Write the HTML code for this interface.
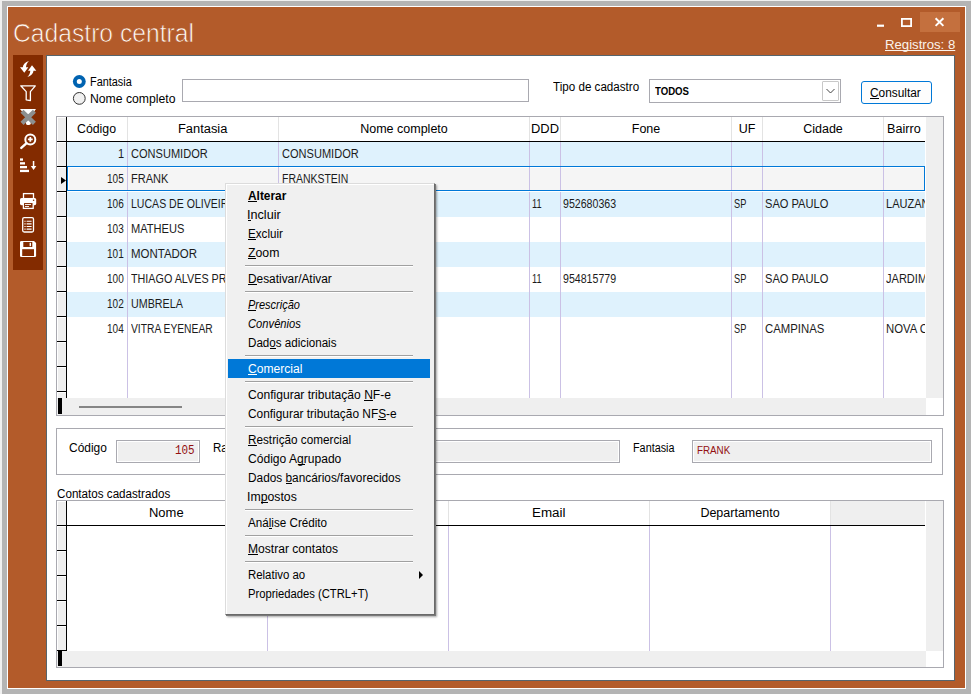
<!DOCTYPE html><html><head><meta charset="utf-8"><style>
*{margin:0;padding:0}
html,body{width:971px;height:694px;overflow:hidden;background:#f0f0f0}
body{position:relative;font-family:"Liberation Sans",sans-serif}
.a{position:absolute}
.t{white-space:pre;transform-origin:0 0}
u{text-decoration:underline;text-underline-offset:1px}
</style></head><body>
<div class="a" style="left:0px;top:0px;width:971px;height:694px;background:#f0f0f0;"></div>
<div class="a" style="left:2px;top:1px;width:969px;height:693px;background:#b4b4b4;"></div>
<div class="a" style="left:7px;top:6px;width:959px;height:683px;background:#ffffff;"></div>
<div class="a" style="left:8px;top:7px;width:957px;height:681px;background:#b35b2a;"></div>
<div class="a t" style="left:13.27px;top:20.00px;font-family:'Liberation Sans', sans-serif;font-size:26.5px;line-height:26.5px;color:#fffaf5;transform:scaleX(0.9307);-webkit-text-stroke:0.7px #b35b2a;">Cadastro central</div>
<div class="a" style="left:920px;top:12px;width:40px;height:20px;background:#c4703e;"></div>
<svg class="a" style="left:870px;top:8px" width="96" height="30" viewBox="0 0 96 30"><rect x="7" y="16.6" width="7" height="2.2" fill="#fff"/><rect x="31.9" y="10.9" width="9.2" height="7.2" fill="none" stroke="#fff" stroke-width="1.8"/><path d="M65.6 10.3 L73.4 17.9 M73.4 10.3 L65.6 17.9" stroke="#fff" stroke-width="2" fill="none"/></svg>
<div class="a t" style="left:884.99px;top:38.00px;font-family:'Liberation Sans', sans-serif;font-size:13px;line-height:13px;color:#fbf3ec;transform:scaleX(1.0128);text-decoration:underline;text-decoration-skip-ink:none;">Registros: 8</div>
<div class="a" style="left:13px;top:55px;width:30px;height:215px;background:#832b00;"></div>
<svg class="a" style="left:13px;top:55px" width="30" height="215" viewBox="13 55 30 215">
<g fill="#fff">
<path d="M29 61 C25.2 62,23 64.5,22.8 67.3 L20 67.3 L24.3 72.8 L28.3 67.3 L26 67.3 C26.1 64.8,27.2 62.6,29 61 Z"/>
<path d="M29 61 C25.2 62,23 64.5,22.8 67.3 L20 67.3 L24.3 72.8 L28.3 67.3 L26 67.3 C26.1 64.8,27.2 62.6,29 61 Z" transform="rotate(180 28.15 69)"/>
</g>
<path d="M20.8 85.8 H35.3 L30.4 91.6 V100.6 L26.2 99.8 V91.6 Z" fill="none" stroke="#fff" stroke-width="1.3" stroke-linejoin="round"/>
<path d="M20 109 H36 L30.8 116 V123.6 Q30.8 125 29 125 H27.6 Q25.9 125 25.9 123 V116 Z" fill="#fff"/>
<path d="M22 111.2 L34.4 123.4 M34.4 111.2 L22 123.4" stroke="#8d8f8f" stroke-width="4.3"/>
<circle cx="30.3" cy="139.4" r="5" fill="none" stroke="#fff" stroke-width="2"/>
<path d="M27.9 139.4 H32.7 M30.3 137 V141.8" stroke="#fff" stroke-width="1.8"/>
<path d="M26.6 143.2 L21.3 147.9" stroke="#fff" stroke-width="2.4" stroke-linecap="round"/>
<g fill="#fff">
<rect x="20" y="158.4" width="3" height="2.3"/>
<rect x="20" y="162.2" width="5" height="2.3"/>
<rect x="20" y="166" width="7" height="2.3"/>
<rect x="20" y="169.8" width="9" height="2.3"/>
<rect x="32.8" y="161" width="1.5" height="6"/>
<path d="M30.8 166 H36.3 L33.55 170 Z"/>
</g>
<rect x="23.5" y="193.6" width="10" height="5" fill="none" stroke="#fff" stroke-width="1.3"/>
<rect x="20" y="198" width="16.2" height="7.2" rx="1.6" fill="#fff"/>
<rect x="23.4" y="202.4" width="9.8" height="6" fill="#832b00" stroke="#fff" stroke-width="1.3"/>
<path d="M25 204.5 H31 M25 206.5 H29" stroke="#fff" stroke-width="0.9"/>
<circle cx="33.6" cy="200.2" r="0.8" fill="#832b00"/>
<rect x="22.7" y="217.6" width="10.8" height="14.4" rx="1.5" fill="none" stroke="#fff" stroke-width="1.3"/>
<path d="M24.4 221.3 H25.6 M26.6 221.3 H31.6 M24.4 223.9 H25.6 M26.6 223.9 H31.6 M24.4 226.5 H25.6 M26.6 226.5 H31.6 M24.4 229.1 H25.6 M26.6 229.1 H31.6" stroke="#fff" stroke-width="1.1"/>
<path d="M20 242.3 Q20 241 21.3 241 H34 L36.1 243.1 V255.7 Q36.1 257 34.8 257 H21.3 Q20 257 20 255.7 Z" fill="#fff"/>
<rect x="23.3" y="242" width="9" height="5" fill="#832b00"/>
<rect x="29.6" y="242.8" width="1.4" height="3.4" fill="#fff"/>
<rect x="22.2" y="249.2" width="11.8" height="6.8" fill="#832b00"/>
</svg>
<div class="a" style="left:46px;top:55px;width:909px;height:626px;background:#ffffff;border:1px solid #56646c;box-sizing:border-box;"></div>
<svg class="a" style="left:66px;top:70px" width="30" height="40" viewBox="66 70 30 40">
<circle cx="79.3" cy="81.5" r="6.4" fill="#0063b1"/><circle cx="79.3" cy="81.5" r="2.5" fill="#fff"/>
<circle cx="79.3" cy="98.4" r="5.9" fill="#f0f0f0" stroke="#333" stroke-width="1"/>
</svg>
<div class="a t" style="left:89.50px;top:76.00px;font-family:'Liberation Sans', sans-serif;font-size:12px;line-height:12px;color:#000;transform:scaleX(0.9061);">Fantasia</div>
<div class="a t" style="left:89.50px;top:93.00px;font-family:'Liberation Sans', sans-serif;font-size:12px;line-height:12px;color:#000;transform:scaleX(1.0171);">Nome completo</div>
<div class="a" style="left:182px;top:79px;width:347px;height:23px;background:#fff;border:1px solid #a9a9b0;box-sizing:border-box;"></div>
<div class="a t" style="left:553.20px;top:81.00px;font-family:'Liberation Sans', sans-serif;font-size:12px;line-height:12px;color:#000;transform:scaleX(0.9690);">Tipo de cadastro</div>
<div class="a" style="left:649px;top:79px;width:192px;height:24px;background:#fff;border:1px solid #a9a9b0;box-sizing:border-box;"></div>
<div class="a t" style="left:654.50px;top:86.00px;font-family:'Liberation Sans', sans-serif;font-size:10.5px;font-weight:bold;line-height:10.5px;color:#000;transform:scaleX(0.9154);">TODOS</div>
<div class="a" style="left:822px;top:81px;width:17px;height:20px;background:#fff;border:1px solid #c8c8c8;box-sizing:border-box;border-radius:1px;"></div>
<svg class="a" style="left:822px;top:81px" width="17" height="20" viewBox="0 0 17 20"><path d="M4.5 8 L8.5 12 L12.5 8" fill="none" stroke="#444" stroke-width="1"/></svg>
<div class="a" style="left:861px;top:81px;width:71px;height:23px;background:#fdfdfd;border:1px solid #0078d7;box-sizing:border-box;border-radius:3px;"></div>
<div class="a t" style="left:870.20px;top:87.00px;font-family:'Liberation Sans', sans-serif;font-size:12px;line-height:12px;color:#000;transform:scaleX(0.9891);">Consultar</div><div class="a" style="left:870.20px;top:98px;width:8.57px;height:1px;background:#000"></div>
<div class="a" style="left:56px;top:116px;width:888px;height:300px;background:#fff;border:1px solid #a9a9b0;box-sizing:border-box;"></div>
<div class="a" style="left:67px;top:142px;width:858px;height:25px;background:#dff2fd;"></div>
<div class="a" style="left:67px;top:167px;width:858px;height:25px;background:#ffffff;"></div>
<div class="a" style="left:67px;top:192px;width:858px;height:25px;background:#dff2fd;"></div>
<div class="a" style="left:67px;top:217px;width:858px;height:25px;background:#ffffff;"></div>
<div class="a" style="left:67px;top:242px;width:858px;height:25px;background:#dff2fd;"></div>
<div class="a" style="left:67px;top:267px;width:858px;height:25px;background:#ffffff;"></div>
<div class="a" style="left:67px;top:292px;width:858px;height:25px;background:#dff2fd;"></div>
<div class="a" style="left:67px;top:317px;width:858px;height:25px;background:#ffffff;"></div>
<div class="a" style="left:67px;top:342px;width:858px;height:25px;background:#ffffff;"></div>
<div class="a" style="left:67px;top:367px;width:858px;height:25px;background:#ffffff;"></div>
<div class="a" style="left:67px;top:392px;width:858px;height:6px;background:#fff;"></div>
<div class="a" style="left:67px;top:117px;width:858px;height:24px;background:#fff;"></div>
<div class="a" style="left:127px;top:117px;width:1px;height:24px;background:#e3e3e3;"></div>
<div class="a" style="left:127px;top:142px;width:1px;height:256px;background:#cbc1e5;"></div>
<div class="a" style="left:278px;top:117px;width:1px;height:24px;background:#e3e3e3;"></div>
<div class="a" style="left:278px;top:142px;width:1px;height:256px;background:#cbc1e5;"></div>
<div class="a" style="left:529px;top:117px;width:1px;height:24px;background:#e3e3e3;"></div>
<div class="a" style="left:529px;top:142px;width:1px;height:256px;background:#cbc1e5;"></div>
<div class="a" style="left:560px;top:117px;width:1px;height:24px;background:#e3e3e3;"></div>
<div class="a" style="left:560px;top:142px;width:1px;height:256px;background:#cbc1e5;"></div>
<div class="a" style="left:731px;top:117px;width:1px;height:24px;background:#e3e3e3;"></div>
<div class="a" style="left:731px;top:142px;width:1px;height:256px;background:#cbc1e5;"></div>
<div class="a" style="left:762px;top:117px;width:1px;height:24px;background:#e3e3e3;"></div>
<div class="a" style="left:762px;top:142px;width:1px;height:256px;background:#cbc1e5;"></div>
<div class="a" style="left:883px;top:117px;width:1px;height:24px;background:#e3e3e3;"></div>
<div class="a" style="left:883px;top:142px;width:1px;height:256px;background:#cbc1e5;"></div>
<div class="a" style="left:57px;top:141px;width:868px;height:1px;background:#000;"></div>
<div class="a" style="left:67px;top:191px;width:858px;height:1px;background:#fff;"></div>
<div class="a" style="left:67px;top:166px;width:858px;height:25px;background:#f5f5f5;border:1px solid #0078d7;box-sizing:border-box;"></div>
<div class="a" style="left:68px;top:167px;width:856px;height:23px;border-top:1px solid #fff;border-left:1px solid #fff;box-sizing:border-box;"></div>
<div class="a" style="left:127px;top:167px;width:1px;height:23px;background:#cbc1e5;"></div>
<div class="a" style="left:278px;top:167px;width:1px;height:23px;background:#cbc1e5;"></div>
<div class="a" style="left:529px;top:167px;width:1px;height:23px;background:#cbc1e5;"></div>
<div class="a" style="left:560px;top:167px;width:1px;height:23px;background:#cbc1e5;"></div>
<div class="a" style="left:731px;top:167px;width:1px;height:23px;background:#cbc1e5;"></div>
<div class="a" style="left:762px;top:167px;width:1px;height:23px;background:#cbc1e5;"></div>
<div class="a" style="left:883px;top:167px;width:1px;height:23px;background:#cbc1e5;"></div>
<div class="a" style="left:57px;top:117px;width:9px;height:281px;background:#efefef;"></div>
<div class="a" style="left:66px;top:117px;width:1px;height:281px;background:#000;"></div>
<div class="a" style="left:57px;top:141px;width:9px;height:1px;background:#000;"></div>
<div class="a" style="left:57px;top:166px;width:9px;height:1px;background:#000;"></div>
<div class="a" style="left:57px;top:191px;width:9px;height:1px;background:#000;"></div>
<div class="a" style="left:57px;top:216px;width:9px;height:1px;background:#000;"></div>
<div class="a" style="left:57px;top:241px;width:9px;height:1px;background:#000;"></div>
<div class="a" style="left:57px;top:266px;width:9px;height:1px;background:#000;"></div>
<div class="a" style="left:57px;top:291px;width:9px;height:1px;background:#000;"></div>
<div class="a" style="left:57px;top:316px;width:9px;height:1px;background:#000;"></div>
<div class="a" style="left:57px;top:341px;width:9px;height:1px;background:#000;"></div>
<div class="a" style="left:57px;top:366px;width:9px;height:1px;background:#000;"></div>
<div class="a" style="left:57px;top:391px;width:9px;height:1px;background:#000;"></div>
<div class="a" style="left:57px;top:117px;width:9px;height:24px;border-top:1px solid #fff;border-left:1px solid #fff;box-sizing:border-box;"></div>
<div class="a" style="left:57px;top:142px;width:9px;height:24px;border-top:1px solid #fff;border-left:1px solid #fff;box-sizing:border-box;"></div>
<div class="a" style="left:57px;top:167px;width:9px;height:24px;border-top:1px solid #fff;border-left:1px solid #fff;box-sizing:border-box;"></div>
<div class="a" style="left:57px;top:192px;width:9px;height:24px;border-top:1px solid #fff;border-left:1px solid #fff;box-sizing:border-box;"></div>
<div class="a" style="left:57px;top:217px;width:9px;height:24px;border-top:1px solid #fff;border-left:1px solid #fff;box-sizing:border-box;"></div>
<div class="a" style="left:57px;top:242px;width:9px;height:24px;border-top:1px solid #fff;border-left:1px solid #fff;box-sizing:border-box;"></div>
<div class="a" style="left:57px;top:267px;width:9px;height:24px;border-top:1px solid #fff;border-left:1px solid #fff;box-sizing:border-box;"></div>
<div class="a" style="left:57px;top:292px;width:9px;height:24px;border-top:1px solid #fff;border-left:1px solid #fff;box-sizing:border-box;"></div>
<div class="a" style="left:57px;top:317px;width:9px;height:24px;border-top:1px solid #fff;border-left:1px solid #fff;box-sizing:border-box;"></div>
<div class="a" style="left:57px;top:342px;width:9px;height:24px;border-top:1px solid #fff;border-left:1px solid #fff;box-sizing:border-box;"></div>
<div class="a" style="left:57px;top:367px;width:9px;height:24px;border-top:1px solid #fff;border-left:1px solid #fff;box-sizing:border-box;"></div>
<div class="a" style="left:57px;top:392px;width:9px;height:6px;border-top:1px solid #fff;border-left:1px solid #fff;box-sizing:border-box;"></div>
<svg class="a" style="left:57px;top:167px" width="9" height="24" viewBox="0 0 9 24"><path d="M4 10 L9 13.5 L4 17 Z" fill="#000"/></svg>
<div class="a t" style="left:77.40px;top:123.00px;font-family:'Liberation Sans', sans-serif;font-size:12.5px;line-height:12.5px;color:#000;transform:scaleX(0.9859);">Código</div>
<div class="a t" style="left:177.67px;top:123.00px;font-family:'Liberation Sans', sans-serif;font-size:12.5px;line-height:12.5px;color:#000;transform:scaleX(1.0300);">Fantasia</div>
<div class="a t" style="left:360.23px;top:123.00px;font-family:'Liberation Sans', sans-serif;font-size:12.5px;line-height:12.5px;color:#000;">Nome completo</div>
<div class="a t" style="left:530.87px;top:123.00px;font-family:'Liberation Sans', sans-serif;font-size:12.5px;line-height:12.5px;color:#000;transform:scaleX(1.0325);">DDD</div>
<div class="a t" style="left:631.75px;top:123.00px;font-family:'Liberation Sans', sans-serif;font-size:12.5px;line-height:12.5px;color:#000;">Fone</div>
<div class="a t" style="left:738.66px;top:123.00px;font-family:'Liberation Sans', sans-serif;font-size:12.5px;line-height:12.5px;color:#000;">UF</div>
<div class="a t" style="left:803.19px;top:123.00px;font-family:'Liberation Sans', sans-serif;font-size:12.5px;line-height:12.5px;color:#000;">Cidade</div>
<div class="a t" style="left:886.99px;top:123.00px;font-family:'Liberation Sans', sans-serif;font-size:12.5px;line-height:12.5px;color:#000;transform:scaleX(1.0095);">Bairro</div>
<div class="a" style="left:926px;top:117px;width:17px;height:281px;background:#efefef;"></div>
<div class="a" style="left:925px;top:117px;width:1px;height:281px;background:#fff;"></div>
<div class="a" style="left:57px;top:398px;width:869px;height:17px;background:#efefef;"></div>
<div class="a" style="left:926px;top:398px;width:17px;height:17px;background:#fff;"></div>
<div class="a" style="left:58px;top:398px;width:4px;height:16px;background:#000;"></div>
<div class="a" style="left:79px;top:406px;width:103px;height:2px;background:#858585;"></div>
<div class="a" style="left:943px;top:116px;width:1px;height:300px;background:#a9a9b0;"></div>
<div class="a" style="left:56px;top:415px;width:888px;height:1px;background:#a9a9b0;"></div>
<div class="a t" style="left:117.86px;top:148.00px;font-family:'Liberation Sans', sans-serif;font-size:12px;line-height:12px;color:#1b1b1b;transform:scaleX(0.9200);">1</div>
<div class="a" style="left:128px;top:142px;width:150px;height:25px;overflow:hidden"><div class="a t" style="left:2.50px;top:6.00px;font-family:'Liberation Sans', sans-serif;font-size:12px;line-height:12px;color:#1b1b1b;transform:scaleX(0.9203);">CONSUMIDOR</div></div>
<div class="a" style="left:279px;top:142px;width:250px;height:25px;overflow:hidden"><div class="a t" style="left:2.50px;top:6.00px;font-family:'Liberation Sans', sans-serif;font-size:12px;line-height:12px;color:#1b1b1b;transform:scaleX(0.9203);">CONSUMIDOR</div></div>
<div class="a t" style="left:107.30px;top:173.00px;font-family:'Liberation Sans', sans-serif;font-size:12px;line-height:12px;color:#1b1b1b;transform:scaleX(0.8355);">105</div>
<div class="a" style="left:128px;top:167px;width:150px;height:25px;overflow:hidden"><div class="a t" style="left:2.50px;top:6.00px;font-family:'Liberation Sans', sans-serif;font-size:12px;line-height:12px;color:#1b1b1b;transform:scaleX(0.9200);">FRANK</div></div>
<div class="a" style="left:279px;top:167px;width:250px;height:25px;overflow:hidden"><div class="a t" style="left:2.50px;top:6.00px;font-family:'Liberation Sans', sans-serif;font-size:12px;line-height:12px;color:#1b1b1b;transform:scaleX(0.8720);">FRANKSTEIN</div></div>
<div class="a t" style="left:107.30px;top:198.00px;font-family:'Liberation Sans', sans-serif;font-size:12px;line-height:12px;color:#1b1b1b;transform:scaleX(0.8355);">106</div>
<div class="a" style="left:128px;top:192px;width:150px;height:25px;overflow:hidden"><div class="a t" style="left:2.50px;top:6.00px;font-family:'Liberation Sans', sans-serif;font-size:12px;line-height:12px;color:#1b1b1b;transform:scaleX(0.8790);">LUCAS DE OLIVEIRA</div></div>
<div class="a" style="left:279px;top:192px;width:250px;height:25px;overflow:hidden"><div class="a t" style="left:2.50px;top:6.00px;font-family:'Liberation Sans', sans-serif;font-size:12px;line-height:12px;color:#1b1b1b;transform:scaleX(0.9200);">LUCAS DE OLIVEIRA</div></div>
<div class="a" style="left:529.3px;top:192px;width:30.700000000000045px;height:25px;overflow:hidden"><div class="a t" style="left:2.50px;top:6.00px;font-family:'Liberation Sans', sans-serif;font-size:12px;line-height:12px;color:#1b1b1b;transform:scaleX(0.7666);">11</div></div>
<div class="a" style="left:560.3px;top:192px;width:170.70000000000005px;height:25px;overflow:hidden"><div class="a t" style="left:2.50px;top:6.00px;font-family:'Liberation Sans', sans-serif;font-size:12px;line-height:12px;color:#1b1b1b;transform:scaleX(0.8842);">952680363</div></div>
<div class="a" style="left:731.3px;top:192px;width:30.700000000000045px;height:25px;overflow:hidden"><div class="a t" style="left:2.50px;top:6.00px;font-family:'Liberation Sans', sans-serif;font-size:12px;line-height:12px;color:#1b1b1b;transform:scaleX(0.7686);">SP</div></div>
<div class="a" style="left:762.3px;top:192px;width:120.70000000000005px;height:25px;overflow:hidden"><div class="a t" style="left:2.50px;top:6.00px;font-family:'Liberation Sans', sans-serif;font-size:12px;line-height:12px;color:#1b1b1b;transform:scaleX(0.9247);">SAO PAULO</div></div>
<div class="a" style="left:883.3px;top:192px;width:41.700000000000045px;height:25px;overflow:hidden"><div class="a t" style="left:2.50px;top:6.00px;font-family:'Liberation Sans', sans-serif;font-size:12px;line-height:12px;color:#1b1b1b;transform:scaleX(0.9200);">LAUZANE</div></div>
<div class="a t" style="left:107.30px;top:223.00px;font-family:'Liberation Sans', sans-serif;font-size:12px;line-height:12px;color:#1b1b1b;transform:scaleX(0.8355);">103</div>
<div class="a" style="left:128px;top:217px;width:150px;height:25px;overflow:hidden"><div class="a t" style="left:2.50px;top:6.00px;font-family:'Liberation Sans', sans-serif;font-size:12px;line-height:12px;color:#1b1b1b;transform:scaleX(0.9243);">MATHEUS</div></div>
<div class="a" style="left:279px;top:217px;width:250px;height:25px;overflow:hidden"><div class="a t" style="left:2.50px;top:6.00px;font-family:'Liberation Sans', sans-serif;font-size:12px;line-height:12px;color:#1b1b1b;transform:scaleX(0.9243);">MATHEUS</div></div>
<div class="a t" style="left:107.30px;top:248.00px;font-family:'Liberation Sans', sans-serif;font-size:12px;line-height:12px;color:#1b1b1b;transform:scaleX(0.8355);">101</div>
<div class="a" style="left:128px;top:242px;width:150px;height:25px;overflow:hidden"><div class="a t" style="left:2.50px;top:6.00px;font-family:'Liberation Sans', sans-serif;font-size:12px;line-height:12px;color:#1b1b1b;transform:scaleX(0.9562);">MONTADOR</div></div>
<div class="a" style="left:279px;top:242px;width:250px;height:25px;overflow:hidden"><div class="a t" style="left:2.50px;top:6.00px;font-family:'Liberation Sans', sans-serif;font-size:12px;line-height:12px;color:#1b1b1b;transform:scaleX(0.9562);">MONTADOR</div></div>
<div class="a t" style="left:107.30px;top:273.00px;font-family:'Liberation Sans', sans-serif;font-size:12px;line-height:12px;color:#1b1b1b;transform:scaleX(0.8355);">100</div>
<div class="a" style="left:128px;top:267px;width:150px;height:25px;overflow:hidden"><div class="a t" style="left:2.50px;top:6.00px;font-family:'Liberation Sans', sans-serif;font-size:12px;line-height:12px;color:#1b1b1b;transform:scaleX(0.8975);">THIAGO ALVES PRADO</div></div>
<div class="a" style="left:279px;top:267px;width:250px;height:25px;overflow:hidden"><div class="a t" style="left:2.50px;top:6.00px;font-family:'Liberation Sans', sans-serif;font-size:12px;line-height:12px;color:#1b1b1b;transform:scaleX(0.9200);">THIAGO ALVES PRADO</div></div>
<div class="a" style="left:529.3px;top:267px;width:30.700000000000045px;height:25px;overflow:hidden"><div class="a t" style="left:2.50px;top:6.00px;font-family:'Liberation Sans', sans-serif;font-size:12px;line-height:12px;color:#1b1b1b;transform:scaleX(0.7666);">11</div></div>
<div class="a" style="left:560.3px;top:267px;width:170.70000000000005px;height:25px;overflow:hidden"><div class="a t" style="left:2.50px;top:6.00px;font-family:'Liberation Sans', sans-serif;font-size:12px;line-height:12px;color:#1b1b1b;transform:scaleX(0.8842);">954815779</div></div>
<div class="a" style="left:731.3px;top:267px;width:30.700000000000045px;height:25px;overflow:hidden"><div class="a t" style="left:2.50px;top:6.00px;font-family:'Liberation Sans', sans-serif;font-size:12px;line-height:12px;color:#1b1b1b;transform:scaleX(0.7686);">SP</div></div>
<div class="a" style="left:762.3px;top:267px;width:120.70000000000005px;height:25px;overflow:hidden"><div class="a t" style="left:2.50px;top:6.00px;font-family:'Liberation Sans', sans-serif;font-size:12px;line-height:12px;color:#1b1b1b;transform:scaleX(0.9247);">SAO PAULO</div></div>
<div class="a" style="left:883.3px;top:267px;width:41.700000000000045px;height:25px;overflow:hidden"><div class="a t" style="left:2.50px;top:6.00px;font-family:'Liberation Sans', sans-serif;font-size:12px;line-height:12px;color:#1b1b1b;transform:scaleX(0.9200);">JARDIM</div></div>
<div class="a t" style="left:107.30px;top:298.00px;font-family:'Liberation Sans', sans-serif;font-size:12px;line-height:12px;color:#1b1b1b;transform:scaleX(0.8355);">102</div>
<div class="a" style="left:128px;top:292px;width:150px;height:25px;overflow:hidden"><div class="a t" style="left:2.50px;top:6.00px;font-family:'Liberation Sans', sans-serif;font-size:12px;line-height:12px;color:#1b1b1b;transform:scaleX(0.8947);">UMBRELA</div></div>
<div class="a" style="left:279px;top:292px;width:250px;height:25px;overflow:hidden"><div class="a t" style="left:2.50px;top:6.00px;font-family:'Liberation Sans', sans-serif;font-size:12px;line-height:12px;color:#1b1b1b;transform:scaleX(0.8947);">UMBRELA</div></div>
<div class="a t" style="left:107.30px;top:323.00px;font-family:'Liberation Sans', sans-serif;font-size:12px;line-height:12px;color:#1b1b1b;transform:scaleX(0.8355);">104</div>
<div class="a" style="left:128px;top:317px;width:150px;height:25px;overflow:hidden"><div class="a t" style="left:2.50px;top:6.00px;font-family:'Liberation Sans', sans-serif;font-size:12px;line-height:12px;color:#1b1b1b;transform:scaleX(0.8562);">VITRA EYENEAR</div></div>
<div class="a" style="left:279px;top:317px;width:250px;height:25px;overflow:hidden"><div class="a t" style="left:2.50px;top:6.00px;font-family:'Liberation Sans', sans-serif;font-size:12px;line-height:12px;color:#1b1b1b;transform:scaleX(0.8562);">VITRA EYENEAR</div></div>
<div class="a" style="left:731.3px;top:317px;width:30.700000000000045px;height:25px;overflow:hidden"><div class="a t" style="left:2.50px;top:6.00px;font-family:'Liberation Sans', sans-serif;font-size:12px;line-height:12px;color:#1b1b1b;transform:scaleX(0.7686);">SP</div></div>
<div class="a" style="left:762.3px;top:317px;width:120.70000000000005px;height:25px;overflow:hidden"><div class="a t" style="left:2.50px;top:6.00px;font-family:'Liberation Sans', sans-serif;font-size:12px;line-height:12px;color:#1b1b1b;transform:scaleX(0.9462);">CAMPINAS</div></div>
<div class="a" style="left:883.3px;top:317px;width:41.700000000000045px;height:25px;overflow:hidden"><div class="a t" style="left:2.50px;top:6.00px;font-family:'Liberation Sans', sans-serif;font-size:12px;line-height:12px;color:#1b1b1b;transform:scaleX(0.9452);">NOVA CAMPINAS</div></div>
<div class="a" style="left:56px;top:428px;width:887px;height:47px;border:1px solid #a9a9b0;box-sizing:border-box;"></div>
<div class="a t" style="left:68.60px;top:442.00px;font-family:'Liberation Sans', sans-serif;font-size:12px;line-height:12px;color:#000;transform:scaleX(0.9960);">Código</div>
<div class="a" style="left:116px;top:440px;width:84px;height:23px;background:#efefef;border:1px solid #a9a9b0;box-sizing:border-box;box-shadow:inset 0 0 0 1px #fff;"></div>
<div class="a t" style="left:174.70px;top:445.00px;font-family:'Liberation Mono', monospace;font-size:12px;line-height:12px;color:#931010;transform:scaleX(0.9111);">105</div>
<div class="a t" style="left:212.50px;top:442.00px;font-family:'Liberation Sans', sans-serif;font-size:12px;line-height:12px;color:#000;transform:scaleX(0.9600);">Razão social</div>
<div class="a" style="left:300px;top:440px;width:320px;height:23px;background:#efefef;border:1px solid #a9a9b0;box-sizing:border-box;box-shadow:inset 0 0 0 1px #fff;"></div>
<div class="a t" style="left:632.70px;top:442.00px;font-family:'Liberation Sans', sans-serif;font-size:12px;line-height:12px;color:#000;transform:scaleX(0.9018);">Fantasia</div>
<div class="a" style="left:692px;top:440px;width:240px;height:23px;background:#efefef;border:1px solid #a9a9b0;box-sizing:border-box;box-shadow:inset 0 0 0 1px #fff;"></div>
<div class="a t" style="left:696.50px;top:445.00px;font-family:'Liberation Sans', sans-serif;font-size:11px;line-height:11px;color:#931010;transform:scaleX(0.8908);">FRANK</div>
<div class="a t" style="left:56.70px;top:488.00px;font-family:'Liberation Sans', sans-serif;font-size:12px;line-height:12px;color:#000;transform:scaleX(0.9697);">Contatos cadastrados</div>
<div class="a" style="left:56px;top:500px;width:888px;height:168px;background:#fff;border:1px solid #a9a9b0;box-sizing:border-box;"></div>
<div class="a" style="left:67px;top:501px;width:858px;height:24px;background:#fff;"></div>
<div class="a" style="left:831px;top:501px;width:94px;height:24px;background:#efefef;"></div>
<div class="a" style="left:267px;top:501px;width:1px;height:24px;background:#e3e3e3;"></div>
<div class="a" style="left:267px;top:526px;width:1px;height:125px;background:#cbc1e5;"></div>
<div class="a" style="left:448px;top:501px;width:1px;height:24px;background:#e3e3e3;"></div>
<div class="a" style="left:448px;top:526px;width:1px;height:125px;background:#cbc1e5;"></div>
<div class="a" style="left:649px;top:501px;width:1px;height:24px;background:#e3e3e3;"></div>
<div class="a" style="left:649px;top:526px;width:1px;height:125px;background:#cbc1e5;"></div>
<div class="a" style="left:830px;top:501px;width:1px;height:24px;background:#e3e3e3;"></div>
<div class="a" style="left:830px;top:526px;width:1px;height:125px;background:#cbc1e5;"></div>
<div class="a" style="left:57px;top:525px;width:868px;height:1px;background:#000;"></div>
<div class="a" style="left:57px;top:501px;width:9px;height:150px;background:#efefef;"></div>
<div class="a" style="left:66px;top:501px;width:1px;height:150px;background:#000;"></div>
<div class="a" style="left:57px;top:525px;width:9px;height:1px;background:#000;"></div>
<div class="a" style="left:57px;top:550px;width:9px;height:1px;background:#000;"></div>
<div class="a" style="left:57px;top:575px;width:9px;height:1px;background:#000;"></div>
<div class="a" style="left:57px;top:600px;width:9px;height:1px;background:#000;"></div>
<div class="a" style="left:57px;top:625px;width:9px;height:1px;background:#000;"></div>
<div class="a" style="left:57px;top:650px;width:9px;height:1px;background:#000;"></div>
<div class="a" style="left:57px;top:501px;width:9px;height:24px;border-top:1px solid #fff;border-left:1px solid #fff;box-sizing:border-box;"></div>
<div class="a" style="left:57px;top:526px;width:9px;height:24px;border-top:1px solid #fff;border-left:1px solid #fff;box-sizing:border-box;"></div>
<div class="a" style="left:57px;top:551px;width:9px;height:24px;border-top:1px solid #fff;border-left:1px solid #fff;box-sizing:border-box;"></div>
<div class="a" style="left:57px;top:576px;width:9px;height:24px;border-top:1px solid #fff;border-left:1px solid #fff;box-sizing:border-box;"></div>
<div class="a" style="left:57px;top:601px;width:9px;height:24px;border-top:1px solid #fff;border-left:1px solid #fff;box-sizing:border-box;"></div>
<div class="a" style="left:57px;top:626px;width:9px;height:24px;border-top:1px solid #fff;border-left:1px solid #fff;box-sizing:border-box;"></div>
<div class="a t" style="left:148.96px;top:507.00px;font-family:'Liberation Sans', sans-serif;font-size:12.5px;line-height:12.5px;color:#000;transform:scaleX(1.0373);">Nome</div>
<div class="a t" style="left:334.37px;top:507.00px;font-family:'Liberation Sans', sans-serif;font-size:12.5px;line-height:12.5px;color:#000;">Telefone</div>
<div class="a t" style="left:531.93px;top:507.00px;font-family:'Liberation Sans', sans-serif;font-size:12.5px;line-height:12.5px;color:#000;transform:scaleX(1.0719);">Email</div>
<div class="a t" style="left:700.39px;top:507.00px;font-family:'Liberation Sans', sans-serif;font-size:12.5px;line-height:12.5px;color:#000;">Departamento</div>
<div class="a" style="left:926px;top:501px;width:17px;height:150px;background:#efefef;"></div>
<div class="a" style="left:925px;top:501px;width:1px;height:150px;background:#fff;"></div>
<div class="a" style="left:57px;top:651px;width:869px;height:16px;background:#efefef;"></div>
<div class="a" style="left:926px;top:651px;width:17px;height:16px;background:#fff;"></div>
<div class="a" style="left:58px;top:651px;width:4px;height:15px;background:#000;"></div>
<div class="a" style="left:943px;top:500px;width:1px;height:168px;background:#a9a9b0;"></div>
<div class="a" style="left:56px;top:667px;width:888px;height:1px;background:#a9a9b0;"></div>
<div class="a" style="left:225px;top:183px;width:210px;height:432px;background:#f0f0f0;border-top:1px solid #dcdcdc;border-left:1px solid #dcdcdc;border-right:1px solid #6a6a6a;border-bottom:1px solid #6a6a6a;box-sizing:border-box;box-shadow:inset 1px 1px 0 #fff, 1px 1px 0 #7a7a7a, 2px 2px 2px rgba(0,0,0,0.35);"></div>
<div class="a" style="left:228px;top:359px;width:202px;height:19px;background:#0078d7;"></div>
<div class="a t" style="left:248.20px;top:190.00px;font-family:'Liberation Sans', sans-serif;font-size:12px;font-weight:bold;line-height:12px;color:#000;transform:scaleX(0.9920);">Alterar</div><div class="a" style="left:248.20px;top:201px;width:8.60px;height:1px;background:#000"></div>
<div class="a t" style="left:247.15px;top:209.00px;font-family:'Liberation Sans', sans-serif;font-size:12px;line-height:12px;color:#000;transform:scaleX(1.0511);">Incluir</div><div class="a" style="left:247.90px;top:220px;width:2.75px;height:1px;background:#000"></div>
<div class="a t" style="left:248.20px;top:228.00px;font-family:'Liberation Sans', sans-serif;font-size:12px;line-height:12px;color:#000;transform:scaleX(0.9692);">Excluir</div><div class="a" style="left:248.20px;top:239px;width:7.76px;height:1px;background:#000"></div>
<div class="a t" style="left:248.20px;top:247.00px;font-family:'Liberation Sans', sans-serif;font-size:12px;line-height:12px;color:#000;transform:scaleX(1.0235);">Zoom</div><div class="a" style="left:248.20px;top:258px;width:7.50px;height:1px;background:#000"></div>
<div class="a" style="left:245px;top:265px;width:168px;height:1px;background:#a0a0a0;"></div>
<div class="a" style="left:245px;top:266px;width:168px;height:1px;background:#fff;"></div>
<div class="a t" style="left:248.20px;top:273.00px;font-family:'Liberation Sans', sans-serif;font-size:12px;line-height:12px;color:#000;transform:scaleX(0.9894);">Desativar/Ativar</div><div class="a" style="left:248.20px;top:284px;width:8.57px;height:1px;background:#000"></div>
<div class="a" style="left:245px;top:291px;width:168px;height:1px;background:#a0a0a0;"></div>
<div class="a" style="left:245px;top:292px;width:168px;height:1px;background:#fff;"></div>
<div class="a t" style="left:248.20px;top:299.00px;font-family:'Liberation Sans', sans-serif;font-size:12px;font-style:italic;line-height:12px;color:#000;transform:scaleX(0.9156);">Prescrição</div><div class="a" style="left:248.20px;top:310px;width:7.33px;height:1px;background:#000"></div>
<div class="a t" style="left:248.20px;top:318.00px;font-family:'Liberation Sans', sans-serif;font-size:12px;font-style:italic;line-height:12px;color:#000;transform:scaleX(0.9330);">Convênios</div>
<div class="a t" style="left:248.20px;top:337.00px;font-family:'Liberation Sans', sans-serif;font-size:12px;line-height:12px;color:#000;transform:scaleX(0.9684);">Dados adicionais</div><div class="a" style="left:269.52px;top:348px;width:6.46px;height:1px;background:#000"></div>
<div class="a" style="left:245px;top:355px;width:168px;height:1px;background:#a0a0a0;"></div>
<div class="a" style="left:245px;top:356px;width:168px;height:1px;background:#fff;"></div>
<div class="a t" style="left:248.20px;top:363.00px;font-family:'Liberation Sans', sans-serif;font-size:12px;line-height:12px;color:#fff;transform:scaleX(1.0085);">Comercial</div><div class="a" style="left:248.20px;top:374px;width:8.74px;height:1px;background:#fff"></div>
<div class="a" style="left:245px;top:381px;width:168px;height:1px;background:#a0a0a0;"></div>
<div class="a" style="left:245px;top:382px;width:168px;height:1px;background:#fff;"></div>
<div class="a t" style="left:248.20px;top:389.00px;font-family:'Liberation Sans', sans-serif;font-size:12px;line-height:12px;color:#000;transform:scaleX(1.0064);">Configurar tributação NF-e</div><div class="a" style="left:364.33px;top:400px;width:8.72px;height:1px;background:#000"></div>
<div class="a t" style="left:248.20px;top:408.00px;font-family:'Liberation Sans', sans-serif;font-size:12px;line-height:12px;color:#000;transform:scaleX(0.9908);">Configurar tributação NFS-e</div><div class="a" style="left:378.38px;top:419px;width:7.93px;height:1px;background:#000"></div>
<div class="a" style="left:245px;top:426px;width:168px;height:1px;background:#a0a0a0;"></div>
<div class="a" style="left:245px;top:427px;width:168px;height:1px;background:#fff;"></div>
<div class="a t" style="left:248.20px;top:434.00px;font-family:'Liberation Sans', sans-serif;font-size:12px;line-height:12px;color:#000;transform:scaleX(0.9781);">Restrição comercial</div><div class="a" style="left:248.20px;top:445px;width:8.48px;height:1px;background:#000"></div>
<div class="a t" style="left:248.20px;top:453.00px;font-family:'Liberation Sans', sans-serif;font-size:12px;line-height:12px;color:#000;transform:scaleX(1.0061);">Código Agrupado</div><div class="a" style="left:297.87px;top:464px;width:6.71px;height:1px;background:#000"></div>
<div class="a t" style="left:248.20px;top:472.00px;font-family:'Liberation Sans', sans-serif;font-size:12px;line-height:12px;color:#000;transform:scaleX(0.9861);">Dados bancários/favorecidos</div><div class="a" style="left:285.69px;top:483px;width:6.58px;height:1px;background:#000"></div>
<div class="a t" style="left:247.18px;top:491.00px;font-family:'Liberation Sans', sans-serif;font-size:12px;line-height:12px;color:#000;transform:scaleX(1.0234);">Impostos</div><div class="a" style="left:260.82px;top:502px;width:6.83px;height:1px;background:#000"></div>
<div class="a" style="left:245px;top:509px;width:168px;height:1px;background:#a0a0a0;"></div>
<div class="a" style="left:245px;top:510px;width:168px;height:1px;background:#fff;"></div>
<div class="a t" style="left:248.20px;top:517.00px;font-family:'Liberation Sans', sans-serif;font-size:12px;line-height:12px;color:#000;transform:scaleX(0.9718);">Análise Crédito</div><div class="a" style="left:268.95px;top:528px;width:2.59px;height:1px;background:#000"></div>
<div class="a" style="left:245px;top:535px;width:168px;height:1px;background:#a0a0a0;"></div>
<div class="a" style="left:245px;top:536px;width:168px;height:1px;background:#fff;"></div>
<div class="a t" style="left:248.20px;top:543.00px;font-family:'Liberation Sans', sans-serif;font-size:12px;line-height:12px;color:#000;transform:scaleX(1.0071);">Mostrar contatos</div><div class="a" style="left:248.20px;top:554px;width:10.07px;height:1px;background:#000"></div>
<div class="a" style="left:245px;top:561px;width:168px;height:1px;background:#a0a0a0;"></div>
<div class="a" style="left:245px;top:562px;width:168px;height:1px;background:#fff;"></div>
<div class="a t" style="left:248.20px;top:569.00px;font-family:'Liberation Sans', sans-serif;font-size:12px;line-height:12px;color:#000;transform:scaleX(0.9509);">Relativo ao</div>
<div class="a t" style="left:248.20px;top:588.00px;font-family:'Liberation Sans', sans-serif;font-size:12px;line-height:12px;color:#000;transform:scaleX(0.9370);">Propriedades (CTRL+T)</div>
<svg class="a" style="left:416px;top:569px" width="10" height="12" viewBox="0 0 10 12"><path d="M3 2 L7 6 L3 10 Z" fill="#000"/></svg>
</body></html>
